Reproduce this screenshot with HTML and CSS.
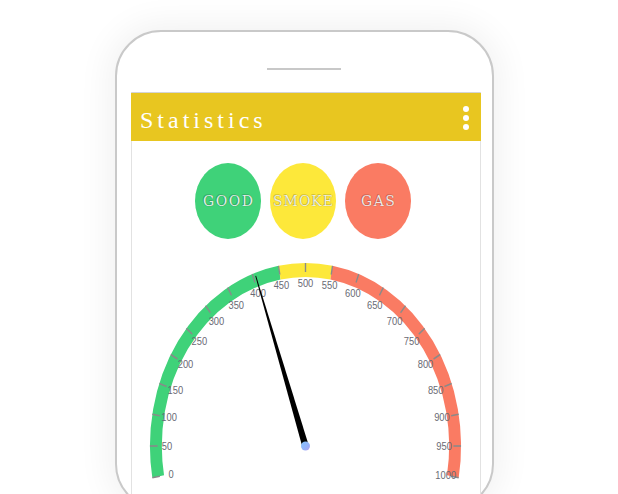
FILE: index.html
```html
<!DOCTYPE html>
<html>
<head>
<meta charset="utf-8">
<link rel="stylesheet" href="styles.css">
</head>
<body>
<div class="stage">
  <div class="phone">
    <div class="speaker"></div>
    <div class="screen">
      <header class="appbar">
        <h1 class="title">Statistics</h1>
        <div class="kebab"><span></span><span></span><span></span></div>
      </header>
      <div class="lights">
        <div class="light good">GOOD</div>
        <div class="light smoke">SMOKE</div>
        <div class="light gas">GAS</div>
      </div>
      <svg class="gauge" width="348" height="244" viewBox="0 0 348 244">
        <defs>
          <linearGradient id="pivot" x1="0" y1="0" x2="1" y2="1">
            <stop offset="0" stop-color="#84c4ff"/>
            <stop offset="0.6" stop-color="#96b2fa"/>
            <stop offset="1" stop-color="#b8a0f0"/>
          </linearGradient>
        </defs>
        <g transform="translate(173.5 196) scale(0.85 1)">
          <g class="band" fill="none" stroke-width="14">
            <path class="seg-green" d="M -173.33 30.56 A 176 176 0 0 1 -30.56 -173.33"/>
            <path class="seg-yellow" d="M -30.56 -173.33 A 176 176 0 0 1 30.56 -173.33"/>
            <path class="seg-red" d="M 30.56 -173.33 A 176 176 0 0 1 173.33 30.56"/>
          </g>
          <g class="ticks">
            <line x1="0" y1="-174" x2="0" y2="-183" transform="rotate(-100)"/>
            <line x1="0" y1="-174" x2="0" y2="-183" transform="rotate(-90)"/>
            <line x1="0" y1="-174" x2="0" y2="-183" transform="rotate(-80)"/>
            <line x1="0" y1="-174" x2="0" y2="-183" transform="rotate(-70)"/>
            <line x1="0" y1="-174" x2="0" y2="-183" transform="rotate(-60)"/>
            <line x1="0" y1="-174" x2="0" y2="-183" transform="rotate(-50)"/>
            <line x1="0" y1="-174" x2="0" y2="-183" transform="rotate(-40)"/>
            <line x1="0" y1="-174" x2="0" y2="-183" transform="rotate(-30)"/>
            <line x1="0" y1="-174" x2="0" y2="-183" transform="rotate(-20)"/>
            <line x1="0" y1="-174" x2="0" y2="-183" transform="rotate(-10)"/>
            <line x1="0" y1="-174" x2="0" y2="-183" transform="rotate(0)"/>
            <line x1="0" y1="-174" x2="0" y2="-183" transform="rotate(10)"/>
            <line x1="0" y1="-174" x2="0" y2="-183" transform="rotate(20)"/>
            <line x1="0" y1="-174" x2="0" y2="-183" transform="rotate(30)"/>
            <line x1="0" y1="-174" x2="0" y2="-183" transform="rotate(40)"/>
            <line x1="0" y1="-174" x2="0" y2="-183" transform="rotate(50)"/>
            <line x1="0" y1="-174" x2="0" y2="-183" transform="rotate(60)"/>
            <line x1="0" y1="-174" x2="0" y2="-183" transform="rotate(70)"/>
            <line x1="0" y1="-174" x2="0" y2="-183" transform="rotate(80)"/>
            <line x1="0" y1="-174" x2="0" y2="-183" transform="rotate(90)"/>
            <line x1="0" y1="-174" x2="0" y2="-183" transform="rotate(100)"/>
          </g>
          <g class="labels">
            <text x="-158" y="28.3">0</text>
            <text x="-163" y="0">50</text>
            <text x="-160.5" y="-28.3">100</text>
            <text x="-153.2" y="-55.7">150</text>
            <text x="-141.2" y="-81.5">200</text>
            <text x="-124.9" y="-104.8">250</text>
            <text x="-104.8" y="-124.9">300</text>
            <text x="-81.5" y="-141.2">350</text>
            <text x="-55.7" y="-153.2">400</text>
            <text x="-28.3" y="-160.5">450</text>
            <text x="0" y="-163">500</text>
            <text x="28.3" y="-160.5">550</text>
            <text x="55.7" y="-153.2">600</text>
            <text x="81.5" y="-141.2">650</text>
            <text x="104.8" y="-124.9">700</text>
            <text x="124.9" y="-104.8">750</text>
            <text x="141.2" y="-81.5">800</text>
            <text x="153.2" y="-55.7">850</text>
            <text x="160.5" y="-28.3">900</text>
            <text x="163" y="0">950</text>
            <text x="165" y="29">1000</text>
          </g>
          <polygon class="needle" points="-3.8,0 3.8,0 0.5,-180 -0.5,-180" transform="rotate(-19)"/>
        </g>
        <circle cx="173.5" cy="196" r="4.5" fill="url(#pivot)"/>
      </svg>
    </div>
  </div>
</div>
</body>
</html>
```

FILE: styles.css
```css
html, body {
  margin: 0;
  padding: 0;
}
body {
  width: 618px;
  height: 494px;
  overflow: hidden;
  background: #ffffff;
  font-family: "Liberation Serif", "Times New Roman", serif;
}
.stage {
  padding: 30px 0 0 115px;
}
.phone {
  width: 379px;
  height: 480px;
  box-sizing: border-box;
  border: 2px solid #c9c9c9;
  border-radius: 46px;
  background: #ffffff;
  box-shadow: 0 0 34px 6px rgba(0, 0, 0, 0.06);
  display: flex;
  flex-direction: column;
  align-items: flex-start;
}
.speaker {
  width: 74px;
  height: 2px;
  background: #c8c8c8;
  margin: 36px 0 0 150px;
}
.screen {
  margin: 22px 0 0 14px;
  width: 350px;
  flex: 1;
  box-sizing: border-box;
  border: 1px solid #e2e2e2;
  border-top-color: #d4d4d4;
  border-bottom: none;
  display: flex;
  flex-direction: column;
}
.appbar {
  margin: 0 -1px;
  height: 48px;
  background: #e8c620;
  display: flex;
  justify-content: space-between;
  align-items: flex-start;
  padding: 0 12px 0 9px;
}
.title {
  margin: 0;
  padding-top: 6px;
  line-height: 42px;
  font-size: 24px;
  font-weight: normal;
  letter-spacing: 4px;
  color: #ffffff;
  font-family: "Liberation Serif", "Times New Roman", serif;
}
.kebab {
  margin-top: 13px;
  display: flex;
  flex-direction: column;
  gap: 3px;
}
.kebab span {
  width: 6px;
  height: 6px;
  border-radius: 50%;
  background: #ffffff;
}
.lights {
  margin-top: 22px;
  display: flex;
  justify-content: center;
  gap: 9px;
  padding-right: 6px;
}
.light {
  width: 66px;
  height: 76px;
  border-radius: 50%;
  display: flex;
  align-items: center;
  justify-content: center;
  font-family: "DejaVu Serif", "Liberation Serif", serif;
  font-size: 14px;
  letter-spacing: 1.5px;
  padding-left: 1.5px;
  box-sizing: border-box;
  color: rgba(255, 255, 255, 0.88);
  text-shadow: -1px -1px 0 rgba(0, 0, 0, 0.14), 0 0 1px rgba(0, 0, 0, 0.45);
  white-space: nowrap;
}
.good { background: #3fd279; }
.smoke { background: #fde83a; letter-spacing: 1px; padding-left: 1px; }
.gas { background: #fa7b63; }
.gauge {
  display: block;
  margin-top: 11px;
}
.seg-green { stroke: #3fd279; }
.seg-yellow { stroke: #fde83a; }
.seg-red { stroke: #fa7b63; }
.ticks line {
  stroke: #8a8a8a;
  stroke-width: 1.6;
}
.labels text {
  font-family: "Liberation Sans", Arial, sans-serif;
  font-size: 11px;
  fill: #6a6a74;
  text-anchor: middle;
  dominant-baseline: central;
}
.needle {
  fill: #000000;
}
```
